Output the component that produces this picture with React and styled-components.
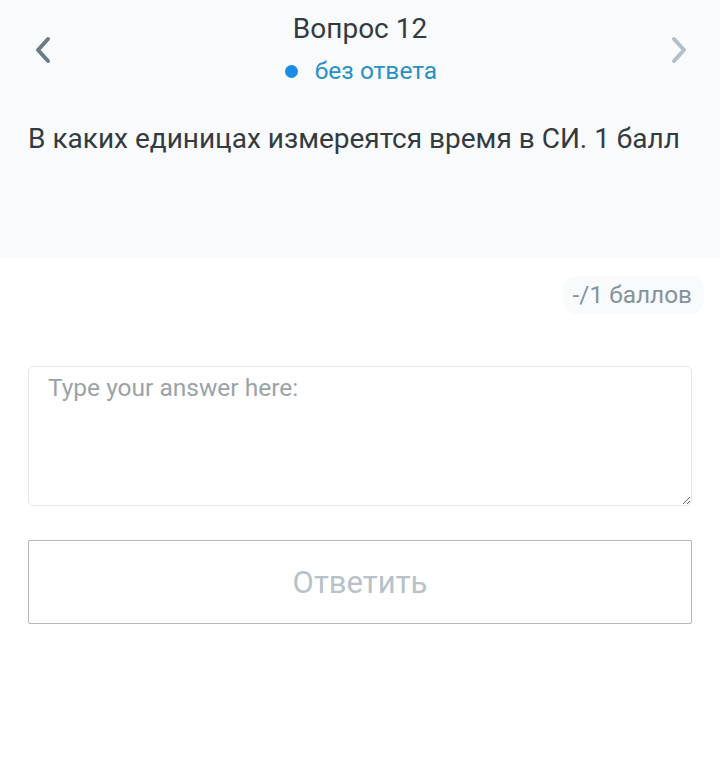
import React from "react";
import styled, { createGlobalStyle } from "styled-components";

const Global = createGlobalStyle`
  html, body { margin: 0; padding: 0; background: #ffffff; }
  body { font-family: Roboto, "Noto Sans", sans-serif; }
  * { box-sizing: border-box; }
`;

const Page = styled.div`
  width: 720px;
  min-height: 768px;
  background: #fff;
`;

const Header = styled.div`
  background: #f8fafc;
  height: 258px;
  padding: 10px 28px 0;
`;

const NavRow = styled.div`
  display: grid;
  grid-template-columns: 40px 1fr 40px;
  align-items: center;
`;

const NavButton = styled.button`
  border: none;
  background: transparent;
  padding: 0 ${(p) => (p.$side === "left" ? "0 0 6px" : "4px 0 0")};
  width: 40px;
  height: 40px;
  display: flex;
  align-items: center;
  justify-content: ${(p) => (p.$side === "left" ? "flex-start" : "flex-end")};
  color: ${(p) => (p.$disabled ? "#b3bfc6" : "#6b7b86")};
  cursor: pointer;
  margin-top: 4px;
`;

const TitleBlock = styled.div`
  display: flex;
  flex-direction: column;
  align-items: center;
`;

const Title = styled.div`
  font-size: 28px;
  line-height: 38px;
  color: #333b40;
`;

const Status = styled.div`
  display: flex;
  align-items: center;
  gap: 17px;
  margin-top: 8px;
  margin-left: 2px;
  font-size: 24.5px;
  line-height: 30px;
  color: #2a90c4;
`;

const Dot = styled.span`
  width: 13px;
  height: 13px;
  border-radius: 50%;
  background: #1a8be6;
`;

const Question = styled.div`
  margin-top: 34px;
  font-size: 28px;
  line-height: 38px;
  color: #333b40;
`;

const Body = styled.div`
  padding: 18px 28px 0;
  display: flex;
  flex-direction: column;
`;

const ScoreRow = styled.div`
  display: flex;
  justify-content: flex-end;
  margin-right: -12px;
`;

const Score = styled.span`
  background: #f8fafb;
  border-radius: 14px;
  padding: 3px 12px 3px 10px;
  font-size: 24.4px;
  line-height: 32px;
  color: #84939b;
`;

const Answer = styled.textarea`
  margin-top: 52px;
  width: 100%;
  height: 140px;
  border: 1px solid #e3e7ea;
  border-radius: 6px;
  padding: 5px 19px;
  font-family: Roboto, "Noto Sans", sans-serif;
  font-size: 24.5px;
  line-height: 32px;
  color: #333;
  resize: vertical;
  outline: none;
  &::placeholder { color: #9aa3a8; }
`;

const Submit = styled.button`
  margin-top: 34px;
  width: 100%;
  height: 84px;
  background: #fff;
  border: 1px solid #b4b8bb;
  border-radius: 2px;
  font-family: Roboto, "Noto Sans", sans-serif;
  font-size: 31px;
  color: #b6c2c8;
`;

const Chevron = ({ dir }) => (
  <svg width="18" height="28" viewBox="0 0 18 28" fill="none">
    <path
      d={dir === "left" ? "M14 3 L4 14 L14 25" : "M4 3 L14 14 L4 25"}
      stroke="currentColor"
      strokeWidth="4"
      strokeLinecap="round"
      strokeLinejoin="round"
    />
  </svg>
);

export default function App() {
  return (
    <Page>
      <Global />
      <Header>
        <NavRow>
          <NavButton $side="left" aria-label="Назад">
            <Chevron dir="left" />
          </NavButton>
          <TitleBlock>
            <Title>Вопрос 12</Title>
            <Status>
              <Dot />
              без ответа
            </Status>
          </TitleBlock>
          <NavButton $side="right" $disabled aria-label="Вперёд">
            <Chevron dir="right" />
          </NavButton>
        </NavRow>
        <Question>В каких единицах измереятся время в СИ. 1 балл</Question>
      </Header>
      <Body>
        <ScoreRow>
          <Score>-/1 баллов</Score>
        </ScoreRow>
        <Answer placeholder="Type your answer here:" />
        <Submit>Ответить</Submit>
      </Body>
    </Page>
  );
}
